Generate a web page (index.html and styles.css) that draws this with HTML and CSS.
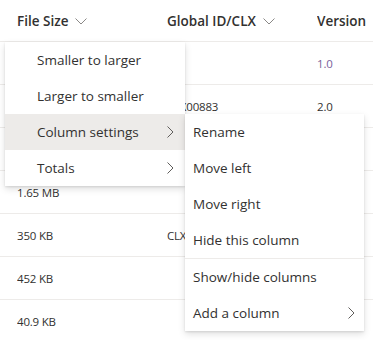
FILE: index.html
```html
<!DOCTYPE html>
<html lang="en">
<head>
  <meta charset="UTF-8">
  <meta name="viewport" content="width=device-width, initial-scale=1.0">
  <title>Document list</title>
  <link rel="stylesheet" href="styles.css">
</head>
<body>
  <div class="list">
    <div class="list-header">
      <div class="cell">File Size
        <svg class="chevron-down" width="12" height="7" viewBox="0 0 12 7"><path d="M0.5 0.5 L6 6 L11.5 0.5" fill="none" stroke="#8a8886" stroke-width="1"/></svg>
      </div>
      <div class="cell">Global ID/CLX
        <svg class="chevron-down" width="12" height="7" viewBox="0 0 12 7"><path d="M0.5 0.5 L6 6 L11.5 0.5" fill="none" stroke="#8a8886" stroke-width="1"/></svg>
      </div>
      <div class="cell">Version
        <svg class="chevron-down" width="12" height="7" viewBox="0 0 12 7"><path d="M0.5 0.5 L6 6 L11.5 0.5" fill="none" stroke="#8a8886" stroke-width="1"/></svg>
      </div>
    </div>
    <div class="list-row">
      <div class="cell"></div>
      <div class="cell"></div>
      <div class="cell version">1.0</div>
    </div>
    <div class="list-row">
      <div class="cell"></div>
      <div class="cell">CLX00883</div>
      <div class="cell">2.0</div>
    </div>
    <div class="list-row">
      <div class="cell"></div>
      <div class="cell"></div>
      <div class="cell"></div>
    </div>
    <div class="list-row">
      <div class="cell">1.65 MB</div>
      <div class="cell"></div>
      <div class="cell"></div>
    </div>
    <div class="list-row">
      <div class="cell">350 KB</div>
      <div class="cell">CLX</div>
      <div class="cell"></div>
    </div>
    <div class="list-row">
      <div class="cell">452 KB</div>
      <div class="cell"></div>
      <div class="cell"></div>
    </div>
    <div class="list-row">
      <div class="cell">40.9 KB</div>
      <div class="cell"></div>
      <div class="cell"></div>
    </div>
  </div>

  <ul class="menu menu-sort">
    <li class="menu-item">Smaller to larger</li>
    <li class="menu-item">Larger to smaller</li>
    <li class="menu-item active">Column settings
      <svg class="chevron-right" width="7" height="12" viewBox="0 0 7 12"><path d="M0.5 0.5 L6 6 L0.5 11.5" fill="none" stroke="#605e5c" stroke-width="1"/></svg>
    </li>
    <li class="menu-item">Totals
      <svg class="chevron-right" width="7" height="12" viewBox="0 0 7 12"><path d="M0.5 0.5 L6 6 L0.5 11.5" fill="none" stroke="#605e5c" stroke-width="1"/></svg>
    </li>
  </ul>

  <ul class="menu menu-settings">
    <li class="menu-item">Rename</li>
    <li class="menu-item">Move left</li>
    <li class="menu-item">Move right</li>
    <li class="menu-item">Hide this column</li>
    <li class="menu-divider"></li>
    <li class="menu-item">Show/hide columns</li>
    <li class="menu-item">Add a column
      <svg class="chevron-right" width="7" height="12" viewBox="0 0 7 12"><path d="M0.5 0.5 L6 6 L0.5 11.5" fill="none" stroke="#605e5c" stroke-width="1"/></svg>
    </li>
  </ul>
</body>
</html>
```

FILE: styles.css
```css
body {
  margin: 0;
  font-family: "Open Sans", "Noto Sans", sans-serif;
  color: #323130;
  background: #fff;
  overflow: hidden;
}

.list {
  width: 373px;
  overflow: hidden;
}

.list-header,
.list-row {
  display: grid;
  grid-template-columns: 150px 150px 1fr;
  padding-left: 17px;
  border-bottom: 1px solid #edebe9;
}

.list-header {
  height: 41px;
  align-items: center;
  font-size: 13.5px;
  font-weight: 600;
}

.list-header .cell {
  display: flex;
  align-items: center;
}

.chevron-down {
  margin-left: 7px;
  margin-top: 1px;
  flex-shrink: 0;
}

.list-row {
  height: 42px;
  align-items: center;
  font-size: 11.5px;
  letter-spacing: -0.2px;
}

.cell {
  white-space: nowrap;
  overflow: hidden;
}

.version {
  color: #7a5f9c;
}

.menu {
  position: absolute;
  margin: 0;
  padding: 0;
  list-style: none;
  background: #fff;
  box-shadow: 0 3px 7px rgba(0, 0, 0, 0.13), 0 0.6px 2px rgba(0, 0, 0, 0.1);
}

.menu-sort {
  left: 5px;
  top: 42px;
  width: 180px;
}

.menu-settings {
  left: 185px;
  top: 114px;
  width: 179px;
}

.menu-item {
  height: 36px;
  display: flex;
  align-items: center;
  font-size: 13.5px;
  position: relative;
}

.menu-sort .menu-item {
  padding-left: 32px;
}

.menu-settings .menu-item {
  padding-left: 8px;
}

.menu-item.active {
  background: #edebe9;
}

.chevron-right {
  position: absolute;
  right: 11px;
  top: 12px;
}

.menu-settings .chevron-right {
  right: 9px;
}

.menu-divider {
  height: 1px;
  background: #edebe9;
}
```
